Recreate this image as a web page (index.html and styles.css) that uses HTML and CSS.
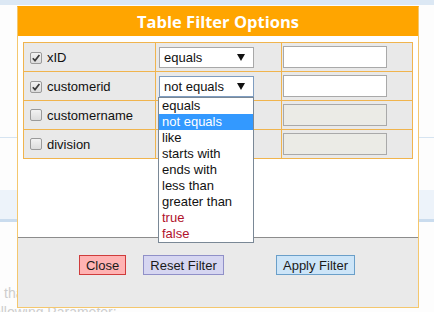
FILE: index.html
```html
<!DOCTYPE html>
<html lang="en">
<head>
  <meta charset="UTF-8">
  <title>Table Filter Options</title>
  <link rel="stylesheet" href="styles.css">
</head>
<body>
<div id="page">
  <div class="band-top"></div>
  <div class="rule"></div>
  <div class="band"></div>
  <p class="note">that is not the case<br><span class="cut">following Parameter:</span></p>
</div>

<div id="dialog">
  <div class="dialog-title">Table Filter Options</div>
  <div class="dialog-body">
    <table class="filters">
      <colgroup>
        <col class="c1">
        <col class="c2">
        <col>
      </colgroup>
      <tr>
        <td class="col-name"><span class="check on"><svg width="10" height="10" viewBox="0 0 10 10"><path d="M1.8 5.2 L4 7.6 L8.4 2" fill="none" stroke="#3c3c3c" stroke-width="1.7"/></svg></span>xID</td>
        <td class="col-op"><div class="select"><span>equals</span><svg width="8" height="7" viewBox="0 0 8 7"><polygon points="0,0 8,0 4,7" fill="#111"/></svg></div></td>
        <td class="col-val"><input class="field" type="text"></td>
      </tr>
      <tr>
        <td class="col-name"><span class="check on"><svg width="10" height="10" viewBox="0 0 10 10"><path d="M1.8 5.2 L4 7.6 L8.4 2" fill="none" stroke="#3c3c3c" stroke-width="1.7"/></svg></span>customerid</td>
        <td class="col-op"><div class="select focus"><span>not equals</span><svg width="8" height="7" viewBox="0 0 8 7"><polygon points="0,0 8,0 4,7" fill="#111"/></svg></div></td>
        <td class="col-val"><input class="field" type="text"></td>
      </tr>
      <tr>
        <td class="col-name"><span class="check"></span>customername</td>
        <td class="col-op"><div class="select"><span>equals</span><svg width="8" height="7" viewBox="0 0 8 7"><polygon points="0,0 8,0 4,7" fill="#111"/></svg></div></td>
        <td class="col-val"><input class="field" type="text" disabled></td>
      </tr>
      <tr>
        <td class="col-name"><span class="check"></span>division</td>
        <td class="col-op"><div class="select"><span>equals</span><svg width="8" height="7" viewBox="0 0 8 7"><polygon points="0,0 8,0 4,7" fill="#111"/></svg></div></td>
        <td class="col-val"><input class="field" type="text" disabled></td>
      </tr>
    </table>
  </div>
  <div class="dialog-foot">
    <button class="btn btn-close">Close</button>
    <button class="btn btn-reset">Reset Filter</button>
    <button class="btn btn-apply">Apply Filter</button>
  </div>
</div>

<ul id="options">
  <li>equals</li>
  <li class="picked">not equals</li>
  <li>like</li>
  <li>starts with</li>
  <li>ends with</li>
  <li>less than</li>
  <li>greater than</li>
  <li class="bool">true</li>
  <li class="bool">false</li>
</ul>
</body>
</html>
```

FILE: styles.css
```css
* {
  margin: 0;
  padding: 0;
}

body {
  width: 434px;
  height: 312px;
  overflow: hidden;
  background: #fdfdfd;
  font-family: "Liberation Sans", Arial, sans-serif;
  font-size: 13px;
  color: #111;
}

/* page behind the dialog */
.band-top {
  height: 5px;
  background: #dce8f4;
}

.rule {
  margin-top: 132px;
  height: 1px;
  background: #d6e4f1;
}

.band {
  margin-top: 52px;
  height: 29px;
  background: #edf3fa;
  border-bottom: 3px solid #cadcee;
}

.note {
  margin-top: 62px;
  padding-left: 4px;
  font-size: 14px;
  line-height: 19px;
  color: #cdcdcd;
  white-space: nowrap;
}

.cut {
  margin-left: -15px;
}

/* dialog */
#dialog {
  position: absolute;
  left: 17px;
  top: 6px;
  width: 400px;
  border: 1px solid #f4c76e;
  border-top-color: #ffa500;
  background: #fff;
}

.dialog-title {
  height: 29px;
  line-height: 29px;
  background: #ffa500;
  color: #fff;
  text-align: center;
  font-family: "Open Sans", sans-serif;
  font-weight: bold;
  font-size: 16.5px;
}

.dialog-body {
  height: 201px;
  padding: 6px 0 0 5px;
  box-sizing: border-box;
}

.filters {
  width: 390px;
  table-layout: fixed;
  border-collapse: collapse;
  border: 1px solid #f0b44e;
}

.filters .c1 {
  width: 132px;
}

.filters .c2 {
  width: 126px;
}

.filters td {
  height: 28px;
  padding: 0;
  border: 1px solid #f0b44e;
  background: #e9e9e9;
  white-space: nowrap;
}

.filters .col-name {
  padding-left: 6px;
}

.filters .col-op {
  padding-left: 3px;
}

.filters .col-val {
  padding-left: 1px;
}

.check {
  display: inline-flex;
  align-items: center;
  justify-content: center;
  width: 10px;
  height: 10px;
  margin-right: 5px;
  vertical-align: -1px;
  border: 1px solid #9a9a9a;
  border-radius: 2px;
  background: linear-gradient(#f2f2f2, #dcdcdc);
}

.select {
  display: flex;
  align-items: center;
  justify-content: space-between;
  width: 95px;
  height: 21px;
  padding: 0 8px 0 4px;
  box-sizing: border-box;
  border: 1px solid #a8a8a8;
  background: #fff;
}

.select.focus {
  border-color: #7f9dc0;
}

.field {
  display: block;
  width: 104px;
  height: 22px;
  box-sizing: border-box;
  border: 1px solid #a9a9a9;
  background: #fff;
}

.field:disabled {
  background: #ebebe6;
}

.dialog-foot {
  height: 52px;
  border-top: 1px solid #8c8c8c;
  background: #eaeaea;
  padding: 17px 0 0 61px;
  box-sizing: content-box;
  display: flex;
  align-items: flex-start;
}

.btn {
  height: 20px;
  padding: 0;
  font-family: "Liberation Sans", Arial, sans-serif;
  font-size: 13px;
  color: #1a1a1a;
  border: 1px solid;
  white-space: nowrap;
}

.btn-close {
  width: 47px;
  background: #ffb3b3;
  border-color: #cf3c3c;
}

.btn-reset {
  width: 81px;
  margin-left: 17px;
  background: #d6d6f1;
  border-color: #9090c8;
}

.btn-apply {
  width: 79px;
  margin-left: 52px;
  background: #cde5f8;
  border-color: #6a9fc9;
}

/* open dropdown */
#options {
  position: absolute;
  left: 158px;
  top: 97px;
  width: 94px;
  list-style: none;
  border: 1px solid #7a8896;
  background: #fff;
}

#options li {
  height: 16px;
  line-height: 16px;
  padding-left: 3px;
}

#options li.picked {
  background: #3399ff;
  color: #fff;
}

#options li.bool {
  color: #b0122c;
}
```
